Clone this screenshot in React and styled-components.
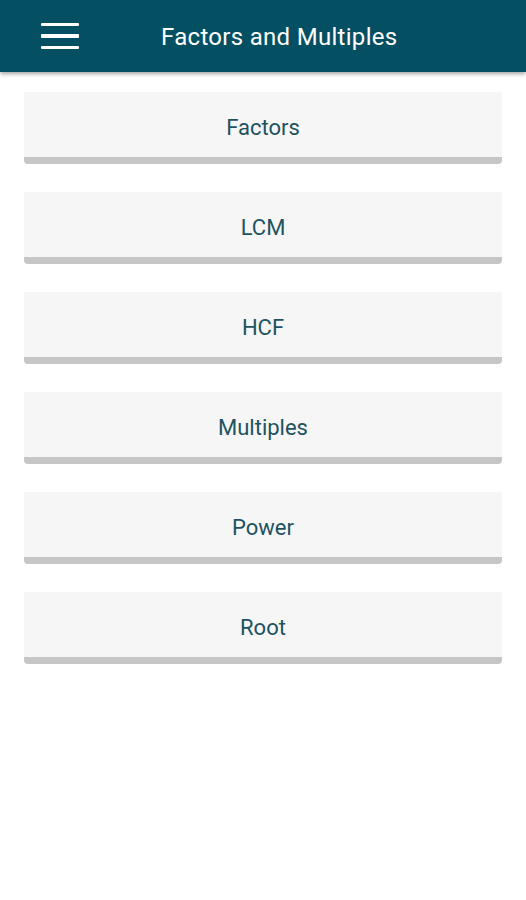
import React from "react";
import styled, { createGlobalStyle } from "styled-components";

const GlobalStyle = createGlobalStyle`
  body {
    margin: 0;
    background: #ffffff;
    font-family: Roboto, "Liberation Sans", sans-serif;
  }
`;

const Page = styled.div`
  width: 526px;
  min-height: 900px;
  background: #ffffff;
`;

const Toolbar = styled.header`
  height: 72px;
  background-color: #044f62;
  display: flex;
  align-items: center;
  box-shadow: 0 2px 4px rgba(0, 0, 0, 0.35);
`;

const MenuButton = styled.div`
  width: 38px;
  margin-left: 41px;
  display: flex;
  flex-direction: column;
  gap: 8px;
`;

const MenuLine = styled.span`
  display: block;
  height: 3.5px;
  background: #ffffff;
  border-radius: 1px;
`;

const Title = styled.h1`
  margin: 2px 0 0 82px;
  color: #ffffff;
  font-size: 24px;
  font-weight: 400;
  letter-spacing: 0.3px;
  white-space: nowrap;
`;

const List = styled.main`
  padding: 20px 24px 0;
  display: flex;
  flex-direction: column;
  gap: 28px;
`;

const Card = styled.div`
  height: 59px;
  padding-top: 6px;
  background: #f6f6f6;
  border-bottom: 7px solid #c6c6c6;
  border-radius: 2px 2px 4px 4px;
  display: flex;
  align-items: center;
  justify-content: center;
  color: #1d5360;
  font-size: 22px;
  box-sizing: content-box;
`;

const items = ["Factors", "LCM", "HCF", "Multiples", "Power", "Root"];

export default function App() {
  return (
    <Page>
      <GlobalStyle />
      <Toolbar>
        <MenuButton>
          <MenuLine />
          <MenuLine />
          <MenuLine />
        </MenuButton>
        <Title>Factors and Multiples</Title>
      </Toolbar>
      <List>
        {items.map((name) => (
          <Card key={name}>{name}</Card>
        ))}
      </List>
    </Page>
  );
}
